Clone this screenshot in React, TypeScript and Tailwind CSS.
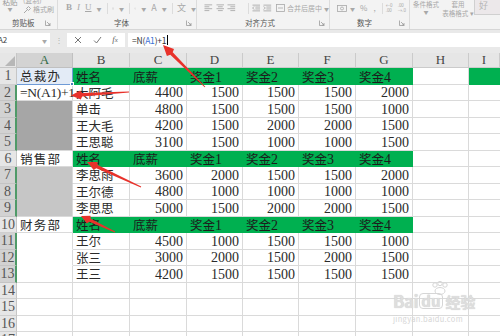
import React from 'react';

const FONT = "font-['Liberation_Serif','Noto_Sans_CJK_SC',serif]";
const UI = "font-['Noto_Sans_CJK_SC','Liberation_Sans',sans-serif]";

type RowData = { a?: string; b?: string; nums?: number[]; header?: boolean };

const HEAD = ['姓名', '底薪', '奖金1', '奖金2', '奖金3', '奖金4'];

const ROWS: RowData[] = [
  { a: '总裁办', header: true },
  { a: '=N(A1)+1', b: '大阿毛', nums: [4400, 1500, 1500, 1500, 2000] },
  { b: '单击', nums: [4800, 1500, 1500, 1500, 1000] },
  { b: '王大毛', nums: [4200, 1500, 2000, 2000, 1500] },
  { b: '王思聪', nums: [3100, 1500, 1000, 1000, 1500] },
  { a: '销售部', header: true },
  { b: '李思雨', nums: [3600, 2000, 1500, 1500, 2000] },
  { b: '王尔德', nums: [4800, 1000, 1000, 1000, 1000] },
  { b: '李思思', nums: [5000, 1500, 2000, 2000, 1500] },
  { a: '财务部', header: true },
  { b: '王尔', nums: [4500, 1000, 1500, 1500, 1000] },
  { b: '张三', nums: [3000, 2000, 1500, 2000, 1500] },
  { b: '王三', nums: [4200, 1500, 1500, 1500, 1500] },
  {},
  {},
  {},
  {},
];

const SELECTED_ROWS = new Set([2, 3, 4, 5, 7, 8, 9, 11, 12, 13]);

function arrowPoints(tip: [number, number], tail: [number, number], headLen = 11, headW = 4.5) {
  const dx = tail[0] - tip[0];
  const dy = tail[1] - tip[1];
  const len = Math.hypot(dx, dy);
  const ux = dx / len;
  const uy = dy / len;
  const nx = -uy;
  const ny = ux;
  const bx = tip[0] + ux * headLen;
  const by = tip[1] + uy * headLen;
  const s0 = 1.7;
  const s1 = 0.4;
  const pts = [
    [tip[0], tip[1]],
    [bx + nx * headW - ux * 1.5, by + ny * headW - uy * 1.5],
    [bx + nx * s0, by + ny * s0],
    [tail[0] + nx * s1, tail[1] + ny * s1],
    [tail[0] - nx * s1, tail[1] - ny * s1],
    [bx - nx * s0, by - ny * s0],
    [bx - nx * headW - ux * 1.5, by - ny * headW - uy * 1.5],
  ];
  return pts.map((p) => p.map((v) => v.toFixed(1)).join(',')).join(' ');
}

function Caret() {
  return <span className="text-[5px] leading-none text-[#a8a8a8]">▼</span>;
}

function VSep() {
  return <div className="w-px h-[11px] bg-[#dcdcdc]" />;
}

function Launcher() {
  return (
    <svg width="6" height="6" viewBox="0 0 6 6" className="shrink-0">
      <path d="M0.5 0.5 V5.5 H5.5" fill="none" stroke="#9a9a9a" strokeWidth="0.8" />
      <path d="M2 2 L5 5 M5 3 V5 H3" fill="none" stroke="#9a9a9a" strokeWidth="0.8" />
    </svg>
  );
}

function AlignIcon({ mode }: { mode: 'l' | 'c' | 'r' }) {
  const lines = [8, 5, 8, 5];
  return (
    <svg width="9" height="8" viewBox="0 0 9 8">
      {lines.map((w, i) => {
        const x = mode === 'l' ? 0.5 : mode === 'c' ? (9 - w) / 2 : 8.5 - w;
        return <rect key={i} x={x} y={i * 2 + 0.3} width={w} height="0.9" fill="#a8a8a8" />;
      })}
    </svg>
  );
}

function Ribbon() {
  return (
    <div className={`h-[30px] bg-[#f3f3f3] border-b border-[#d6d6d6] flex overflow-hidden whitespace-nowrap ${UI}`}>
      {/* 剪贴板 */}
      <div className="w-[58px] h-full flex flex-col border-r border-[#dcdcdc]">
        <div className="h-[16px] flex">
          <div className="w-[20px] flex flex-col items-center -mt-[3px]">
            <span className="text-[7.5px] leading-[9px] text-[#9a9a9a]">粘贴</span>
            <Caret />
          </div>
          <div className="flex flex-col -mt-[4px] pl-[3px]">
            <span className="text-[7px] leading-[8px] text-[#a8a8a8]">(复制)</span>
            <div className="flex items-center gap-[2px] mt-[1px]">
              <svg width="8" height="8" viewBox="0 0 8 8">
                <path d="M1 7 L4 4 M3.5 2.5 L5.5 0.5 L7.5 2.5 L5.5 4.5 Z" stroke="#a8a8a8" strokeWidth="1" fill="none" />
              </svg>
              <span className="text-[7px] leading-[9px] text-[#a8a8a8]">格式刷</span>
            </div>
          </div>
        </div>
        <div className="flex-1 flex items-center pl-[12px] pr-[4px] gap-[10px]">
          <span className="text-[7.5px] text-[#555]">剪贴板</span>
          <Launcher />
        </div>
      </div>
      {/* 字体 */}
      <div className="w-[139px] h-full flex flex-col border-r border-[#dcdcdc]">
        <div className="h-[16px] flex items-center pl-[8px] gap-[5px] text-[#a8a8a8]">
          <span className={`text-[9px] font-bold ${FONT}`}>B</span>
          <span className={`text-[9px] italic ${FONT}`}>I</span>
          <span className={`text-[9px] underline ${FONT}`}>U</span>
          <Caret />
          <VSep />
          <svg width="9" height="9" viewBox="0 0 9 9">
            <rect x="0.5" y="0.5" width="8" height="8" fill="none" stroke="#b8b8b8" strokeWidth="0.8" strokeDasharray="1 1" />
            <path d="M4.5 0.5 V8.5 M0.5 4.5 H8.5" stroke="#b8b8b8" strokeWidth="0.8" />
          </svg>
          <Caret />
          <VSep />
          <svg width="9" height="9" viewBox="0 0 9 9">
            <path d="M1 4.5 L4.5 1 L8 4.5 L4.5 8 Z" fill="none" stroke="#a8a8a8" strokeWidth="0.9" />
          </svg>
          <Caret />
          <span className="text-[9px] text-[#a8a8a8]">A</span>
          <Caret />
          <VSep />
          <span className="text-[9px] text-[#a8a8a8]">文</span>
          <Caret />
        </div>
        <div className="flex-1 flex items-center pl-[56px] pr-[4px]">
          <span className="text-[7.5px] text-[#555] flex-1">字体</span>
          <Launcher />
        </div>
      </div>
      {/* 对齐方式 */}
      <div className="w-[133px] h-full flex flex-col border-r border-[#dcdcdc]">
        <div className="h-[16px] flex items-center pl-[7px] gap-[3px]">
          <AlignIcon mode="l" />
          <AlignIcon mode="c" />
          <AlignIcon mode="r" />
          <div className="w-[6px]" />
          <VSep />
          <svg width="9" height="8" viewBox="0 0 9 8">
            <path d="M0.5 1 H8.5 M3.5 3 H8.5 M3.5 5 H8.5 M0.5 7 H8.5" stroke="#a8a8a8" strokeWidth="0.9" />
            <path d="M2.5 2.5 L0.5 4 L2.5 5.5" fill="none" stroke="#a8a8a8" strokeWidth="0.8" />
          </svg>
          <svg width="9" height="8" viewBox="0 0 9 8">
            <path d="M0.5 1 H8.5 M3.5 3 H8.5 M3.5 5 H8.5 M0.5 7 H8.5" stroke="#a8a8a8" strokeWidth="0.9" />
            <path d="M0.5 2.5 L2.5 4 L0.5 5.5" fill="none" stroke="#a8a8a8" strokeWidth="0.8" />
          </svg>
          <div className="flex items-center gap-[2px] ml-[1px]">
            <svg width="9" height="8" viewBox="0 0 9 8">
              <rect x="0.5" y="0.5" width="8" height="7" fill="none" stroke="#a8a8a8" strokeWidth="0.8" />
              <path d="M2 4 H7" stroke="#a8a8a8" strokeWidth="0.8" />
            </svg>
            <span className="text-[7px] text-[#a8a8a8]">合并后居中</span>
            <Caret />
          </div>
        </div>
        <div className="flex-1 flex items-center pl-[48px] pr-[4px]">
          <span className="text-[7.5px] text-[#555] flex-1">对齐方式</span>
          <Launcher />
        </div>
      </div>
      {/* 数字 */}
      <div className="w-[80px] h-full flex flex-col border-r border-[#dcdcdc]">
        <div className="h-[16px] flex items-center pl-[7px] gap-[3px] text-[#a8a8a8]">
          <svg width="10" height="9" viewBox="0 0 10 9">
            <rect x="0.5" y="1.5" width="9" height="6" fill="none" stroke="#a8a8a8" strokeWidth="0.8" />
            <circle cx="5" cy="4.5" r="1.5" fill="none" stroke="#a8a8a8" strokeWidth="0.8" />
          </svg>
          <Caret />
          <span className="text-[8px] ml-[2px]">%</span>
          <span className="text-[8px] ml-[3px]">,</span>
          <div className="ml-[3px]"><VSep /></div>
          <div className="flex flex-col text-[4.5px] leading-[5px] w-[9px]">
            <span>←0</span>
            <span>.00</span>
          </div>
          <div className="flex flex-col text-[4.5px] leading-[5px] w-[9px]">
            <span>.00</span>
            <span>→.0</span>
          </div>
        </div>
        <div className="flex-1 flex items-center pl-[27px] pr-[4px]">
          <span className="text-[7.5px] text-[#555] flex-1">数字</span>
          <Launcher />
        </div>
      </div>
      {/* 样式 */}
      <div className="flex-1 h-full flex">
        <div className="flex flex-col items-center w-[32px]">
          <span className="text-[6.5px] leading-[9px] text-[#a8a8a8]">条件格式</span>
          <Caret />
        </div>
        <div className="flex flex-col items-center w-[32px]">
          <span className="text-[6.5px] leading-[9px] text-[#a8a8a8]">套用</span>
          <span className="text-[6.5px] leading-[9px] text-[#a8a8a8]">表格格式 ▾</span>
        </div>
        <div className="flex-1 h-[15px] bg-[#ece8ea] border-l border-b border-[#d0d0d0] flex items-center pl-[4px]">
          <span className={`text-[9px] text-[#b6b6b6] ${FONT}`}>好</span>
        </div>
      </div>
    </div>
  );
}

function FormulaBar() {
  return (
    <div className={`h-[23px] bg-[#e9e9e9] pt-[3px] ${UI}`}>
      <div className="h-[14px] flex items-stretch">
        <div className="w-[50px] bg-white flex items-center justify-between pr-[3px]">
          <span className="text-[8px] text-[#444] -ml-[2px]">A2</span>
          <Caret />
        </div>
        <div className="w-[17px] flex items-center justify-center text-[8px] text-[#b0b0b0]">⋮</div>
        <div className="w-[58px] bg-white flex items-center justify-around text-[#777] px-[2px]">
          <svg width="8" height="8" viewBox="0 0 8 8">
            <path d="M1 1 L7 7 M7 1 L1 7" stroke="#666" strokeWidth="0.9" />
          </svg>
          <svg width="9" height="8" viewBox="0 0 9 8">
            <path d="M1 4.5 L3.5 7 L8 1" fill="none" stroke="#666" strokeWidth="0.9" />
          </svg>
          <span className={`text-[9px] italic text-[#666] ${FONT}`}>f<span className="text-[7px]">x</span></span>
        </div>
        <div className="w-[3px]" />
        <div className="flex-1 bg-white flex items-center pl-[4px]">
          <span className="text-[8.5px] text-[#333] tracking-[-0.2px]">
            =N(<span className="text-[#3b6fd4]">A1</span>)+1
          </span>
          <span className="w-px h-[10px] bg-black ml-[1px]" />
        </div>
      </div>
    </div>
  );
}

const COL_LETTERS = ['A', 'B', 'C', 'D', 'E', 'F', 'G', 'H', 'I'];

function CjkText({ text, wide }: { text: string; wide?: boolean }) {
  // CJK in slightly smaller size, digits in serif at cell size
  const parts = text.split(/(\d+)/).filter(Boolean);
  return (
    <span className={`whitespace-nowrap ${wide ? 'tracking-[1.2px]' : ''}`}>
      {parts.map((p, i) =>
        /\d/.test(p) ? (
          <span key={i} className="text-[14px]">{p}</span>
        ) : (
          <span key={i} className="text-[12.5px]">{p}</span>
        )
      )}
    </span>
  );
}

function Grid() {
  const cells: React.ReactNode[] = [];
  cells.push(
    <div key="corner" className="bg-[#e6e6e6] border-r border-b border-[#c6c6c6] relative overflow-hidden">
      <svg width="17" height="15" viewBox="0 0 17 15" className="absolute inset-0">
        <path d="M15 3 L15 13 L5 13 Z" fill="#b7b7b7" />
      </svg>
    </div>
  );
  COL_LETTERS.forEach((c, i) => {
    const sel = i === 0;
    cells.push(
      <div
        key={`h${c}`}
        className={`flex items-center justify-center text-[13px] border-r border-b ${
          sel ? 'bg-[#d3d3d3] text-[#2f6a45] border-[#c0c0c0]' : 'bg-[#e6e6e6] text-[#444] border-[#cbcbcb]'
        }`}
      >
        {c}
      </div>
    );
  });

  ROWS.forEach((row, ri) => {
    const r = ri + 1;
    const sel = SELECTED_ROWS.has(r);
    cells.push(
      <div
        key={`rh${r}`}
        className={`flex items-center justify-center text-[14px] border-b ${
          sel
            ? 'bg-[#d2d2d2] text-[#555] border-[#c4c4c4] border-r-2 border-r-[#4f9a68]'
            : 'bg-[#e6e6e6] text-[#555] border-[#cfcfcf] border-r border-r-[#c6c6c6]'
        }`}
      >
        {r}
      </div>
    );

    let aCls = 'border-r border-b border-[#dadada] bg-white';
    if (r === 1) aCls = 'bg-[#e3ebf6] border-r border-b border-[#6f9bd6] relative';
    else if (r >= 3 && r <= 5) aCls = `bg-[#a6a6a6] border-r border-[#dadada] ${r < 5 ? 'border-b border-b-[#a6a6a6]' : 'border-b'}`;
    else if (r >= 7 && r <= 9) aCls = `bg-[#c6c6c6] border-r border-[#dadada] ${r < 9 ? 'border-b border-b-[#c6c6c6]' : 'border-b'}`;
    else if (r >= 11 && r <= 13) aCls = `bg-white border-r border-[#dadada] ${r < 13 ? 'border-b border-b-white' : 'border-b'}`;
    cells.push(
      <div key={`a${r}`} className={`${aCls} flex items-center pl-[3px] pt-[1px] whitespace-nowrap overflow-visible text-[#2a2a2a]`}>
        {row.a &&
          (r === 2 ? (
            <span className="text-[13.5px] tracking-[-0.3px]">{row.a}</span>
          ) : (
            <CjkText text={row.a} wide />
          ))}
        {r === 1 && <span className="absolute -right-[2px] -bottom-[2px] w-[4px] h-[4px] bg-[#4a7ebb] border border-white" />}
      </div>
    );

    for (let ci = 0; ci < 6; ci++) {
      if (row.header) {
        cells.push(
          <div key={`c${r}-${ci}`} className="bg-[#00b050] flex items-center pl-[3px] pt-[1px] text-[#1c1c1c]">
            <CjkText text={HEAD[ci]} />
          </div>
        );
      } else if (ci === 0) {
        cells.push(
          <div key={`c${r}-${ci}`} className="border-r border-b border-[#dadada] flex items-center pl-[3px] pt-[1px] text-[#2a2a2a]">
            {row.b && <CjkText text={row.b} />}
          </div>
        );
      } else {
        cells.push(
          <div key={`c${r}-${ci}`} className="border-r border-b border-[#dadada] flex items-center justify-end pr-[3px] pt-[1px] text-[14px] text-[#2a2a2a]">
            {row.nums ? row.nums[ci - 1] : ''}
          </div>
        );
      }
    }
    cells.push(<div key={`hcol${r}`} className="border-r border-b border-[#dadada]" />);
    cells.push(<div key={`icol${r}`} className={r === 1 ? 'bg-[#00b050]' : 'border-b border-[#dadada]'} />);
  });

  return (
    <div className={`grid grid-cols-[17px_56px_57px_57px_56px_56px_57px_57px_56px_1fr] grid-rows-[15px_repeat(17,16.5px)] ${FONT}`}>
      {cells}
    </div>
  );
}

function Arrows() {
  const arrows: Array<[[number, number], [number, number], number, number]> = [
    [[163, 45], [205, 87], 12, 5],
    [[71, 95.5], [129, 92], 11, 4.5],
    [[87, 162], [141, 187], 11, 4.5],
    [[81, 216], [115, 232], 10, 4.2],
  ];
  return (
    <svg width="500" height="336" viewBox="0 0 500 336" className="absolute inset-0 pointer-events-none">
      {arrows.map(([tip, tail, hl, hw], i) => (
        <polygon key={i} points={arrowPoints(tip, tail, hl, hw)} fill="#e8322b" />
      ))}
    </svg>
  );
}

function Watermark() {
  return (
    <div className={`absolute left-[393px] top-[281px] pointer-events-none ${UI}`}>
      <svg width="24" height="14" viewBox="0 0 24 14" className="absolute left-[36px] top-0">
        <circle cx="6" cy="4" r="2.2" fill="none" stroke="#d6d6d6" strokeWidth="1" />
        <circle cx="11" cy="2.5" r="2.2" fill="none" stroke="#d6d6d6" strokeWidth="1" />
        <circle cx="16" cy="4" r="2.2" fill="none" stroke="#d6d6d6" strokeWidth="1" />
        <ellipse cx="11" cy="10" rx="5" ry="3.5" fill="none" stroke="#d6d6d6" strokeWidth="1" />
      </svg>
      <div className="mt-[11px] flex items-end gap-[1px] text-[#dedede] font-bold leading-none">
        <span className="text-[17px] tracking-[-0.5px] [text-shadow:0_0_1px_#c8c8c8]">Bai</span>
        <span className="text-[15px] border border-[#d6d6d6] rounded-[4px] px-[1px] leading-[14px] [text-shadow:0_0_1px_#c8c8c8]">du</span>
        <span className="text-[15px] ml-[2px] [text-shadow:0_0_1px_#c8c8c8]">经验</span>
      </div>
      <div className="text-[7.5px] text-[#d6d6d6] mt-[4px] tracking-[0.3px]">jingyan.baidu.com</div>
    </div>
  );
}

export default function App() {
  return (
    <div className="w-[500px] h-[336px] relative overflow-hidden bg-white">
      <Ribbon />
      <FormulaBar />
      <Grid />
      <Arrows />
      <Watermark />
    </div>
  );
}
